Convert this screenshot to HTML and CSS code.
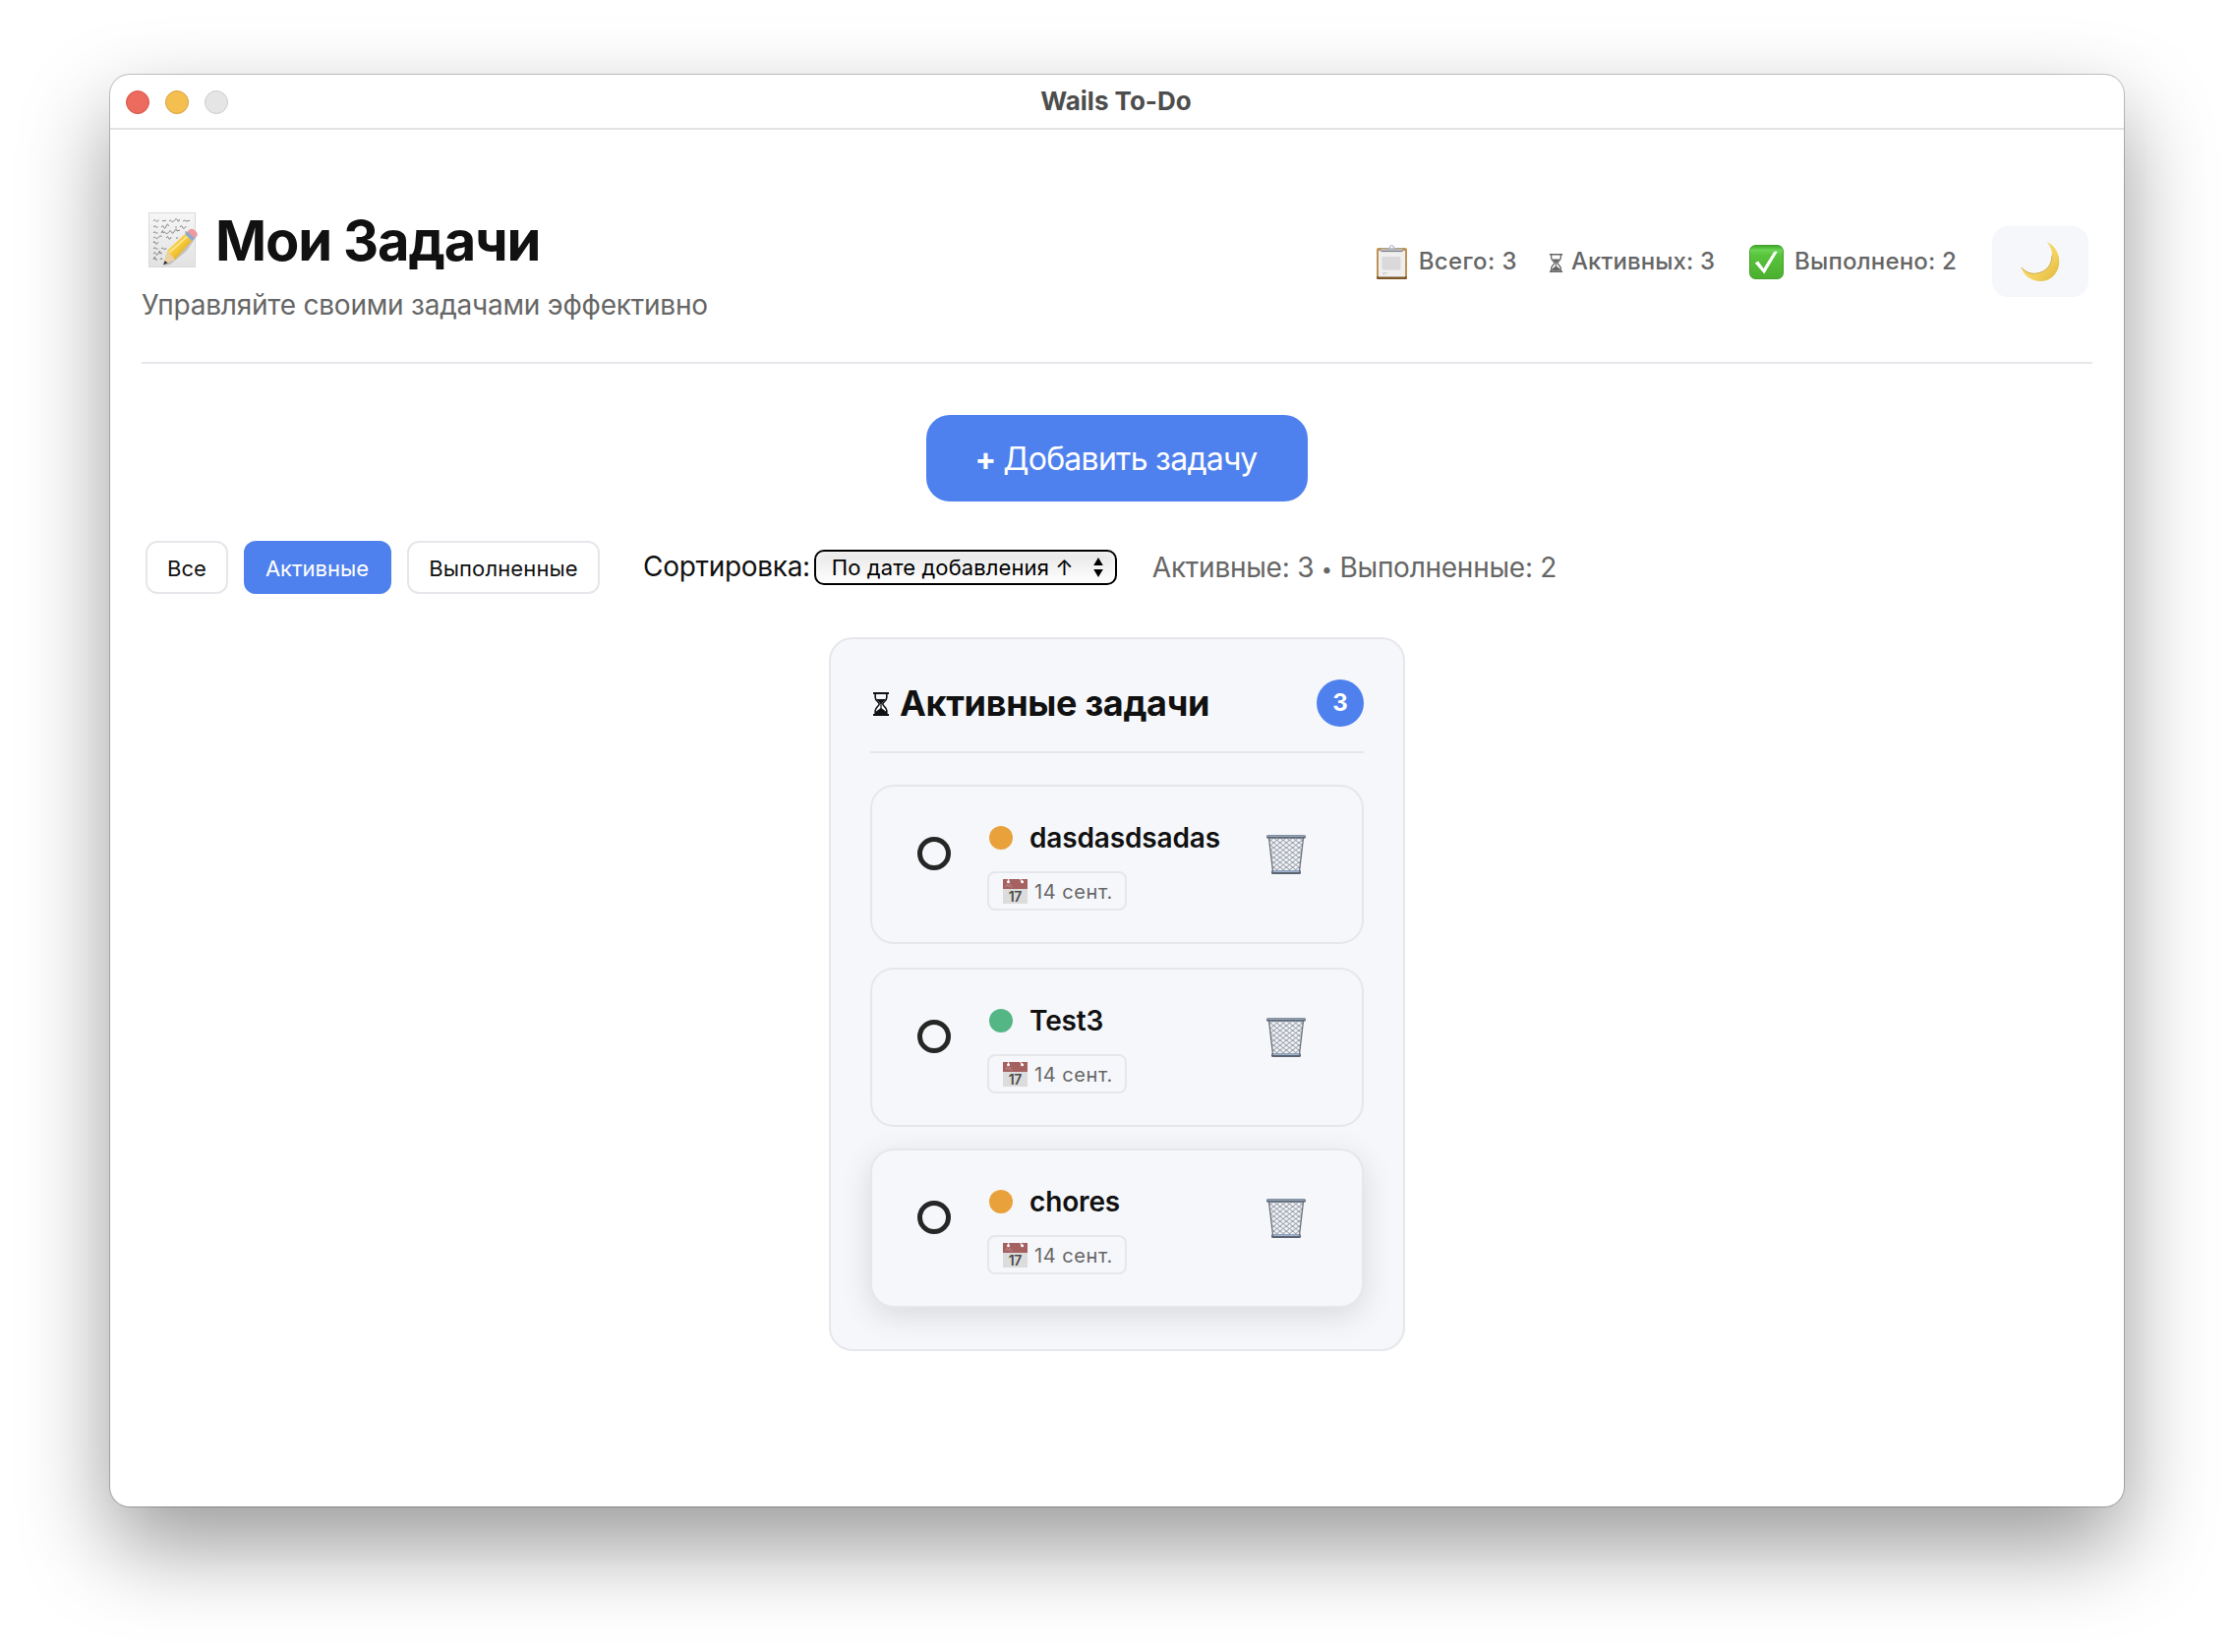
FILE: index.html
```html
<!DOCTYPE html>
<html lang="ru">
<head>
<meta charset="utf-8">
<title>Wails To-Do</title>
<link rel="stylesheet" href="styles.css">
</head>
<body>
<svg class="defs" width="0" height="0" aria-hidden="true">
  <defs>
    <linearGradient id="paper" x1="0" y1="0" x2="0" y2="1"><stop offset="0" stop-color="#f6f6f6"/><stop offset="1" stop-color="#e2e2e2"/></linearGradient>
    <linearGradient id="green" x1="0" y1="0" x2="0" y2="1"><stop offset="0" stop-color="#3fa82a"/><stop offset=".14" stop-color="#6bd454"/><stop offset=".28" stop-color="#59c43c"/><stop offset="1" stop-color="#4caf2f"/></linearGradient>
    <linearGradient id="moon" x1="0" y1="0" x2="1" y2="1"><stop offset="0" stop-color="#f7df78"/><stop offset=".6" stop-color="#f4d35c"/><stop offset="1" stop-color="#dfb43c"/></linearGradient>
    <linearGradient id="pencil" x1="0" y1="0" x2="1" y2="1"><stop offset="0" stop-color="#fbe07a"/><stop offset=".5" stop-color="#f5c83a"/><stop offset="1" stop-color="#c98e1c"/></linearGradient>
    <pattern id="mesh" width="6.400" height="5" patternUnits="userSpaceOnUse" x="1" y="3"><path d="M0 0L6.400 5M6.400 0L0 5" stroke="#858b94" stroke-width=".9"/></pattern>
    <symbol id="i-hourglass" viewBox="0 0 18 24">
      <path d="M1 1h16M1 23h16" stroke="currentColor" stroke-width="1.800" fill="none"/>
      <path d="M3.200 1v4.500c0 3 4 4.600 4 6.500s-4 3.500-4 6.500V23M14.800 1v4.500c0 3-4 4.600-4 6.500s4 3.500 4 6.500V23" stroke="currentColor" stroke-width="1.600" fill="none"/>
      <path d="M4.500 7h9c-1 2-3.300 3.200-3.900 5v4.200l4.400 3.300V22H4v-2.500l4.400-3.300V12C7.800 10.200 5.500 9 4.500 7z" fill="currentColor"/>
    </symbol>
    <symbol id="i-trash" viewBox="0 0 40 40">
      <path d="M2.500 3h35l-4 34h-27z" fill="#f1f3f8"/>
      <path d="M2.500 3h35l-4 34h-27z" fill="url(#mesh)"/>
      <path d="M2.500 3l4 34M37.500 3l-4 34" stroke="#6a727d" stroke-width="1.300"/>
      <rect x="0" y="0" width="40" height="3.800" rx="1.900" fill="#5d6977"/>
      <rect x="1" y=".5" width="38" height="1.300" rx=".6" fill="#a9b9cb"/>
      <rect x="5" y="36" width="30" height="4" rx="1.500" fill="#5b6470"/>
      <rect x="6.500" y="36.200" width="27" height="1.800" rx=".9" fill="#9fb4d0"/>
    </symbol>
    <symbol id="i-calendar" viewBox="0 0 25 25">
      <rect width="25" height="25" fill="#dcdcdc"/>
      <rect width="25" height="10" fill="#a56060"/>
      <path d="M2.500 8l1.500-3 1.500 3 1.500-3 1 3h2" stroke="#bf8b8b" stroke-width=".8" fill="none"/>
      <path d="M5.500 0v2.500M17.500 0l2 2.500" stroke="#f3dede" stroke-width="1.200"/>
      <circle cx="5.500" cy="2.800" r="1.500" fill="#fff"/><circle cx="19.600" cy="2.800" r="1.500" fill="#fff"/>
      <text x="12.300" y="22.500" text-anchor="middle" class="cal-num">17</text>
    </symbol>
  </defs>
</svg>

<main class="window">
  <div class="titlebar">
    <div class="lights"><i class="light red"></i><i class="light yellow"></i><i class="light grey"></i></div>
    <span class="window-title">Wails To-Do</span>
  </div>

  <div class="app">
    <header class="header">
      <div class="heading">
        <h1 class="title">
          <svg class="memo" viewBox="0 0 50 56">
            <rect x=".5" y=".5" width="47" height="55" fill="url(#paper)" stroke="#d9d9d9"/>
            <path d="M5 9q1.500-3 2.500-.5t3-1M14 9q1-2 2 0l2-1M21 9q1.500-2 2.500 0t3-1 3 0 2-1M35 9q2-2 3 0l4-.7M5 15q1.500-3 2.500 0h2M13 15q1.500-3 2.500 0t2.500-1 2.500 0M27 15h2M32 15q1.500-3 2.500 0t4-1M5 21q1.500-3 2.500 0h2M13 21l1.500-2.500.5 2.500q1.500-2 2.500 0t3-1 3 0 3-1 2.500 0l3-1M37 20h2M5 26q1.500-2 2.500 0t3-1 3 0M18 26q1.500-3 2.500 0t2.500-1M28 26h2M5 31q1-3 2 0t3-1M5 37q1.500-3 2.500 0h2M13 37q1-2 2.500 0t2.500-1M5 42q1.500-3 2.500 0t3-1l1-2 .5 3 2-1M5 48l1.500-3 .5 3h2M12 48q1-3 2 0" stroke="#6b6b6b" stroke-width=".8" fill="none"/>
            <path d="M16 54l22-20 10-14 2 3-11 16-17 14z" fill="#8a8a8a" opacity=".4"/>
            <path d="M19 39L37 22l7 7-17 19z" fill="url(#pencil)"/>
            <path d="M21.500 40.500L39.500 24.500" stroke="#fdeb9c" stroke-width="1.500"/>
            <path d="M19 39l8 9-11.500 5z" fill="#ecd0a0"/>
            <path d="M16.600 49l3 2.600-4.600 1.900z" fill="#333"/>
            <path d="M37 22l3-2.800 7.500 6.500-3.500 3.300z" fill="#8fa9c8"/>
            <path d="M39.500 19.500q3-4.500 7.500-1.500 4.500 3.500 1.500 6.500l-1.500 1.500z" fill="#ee9aa0"/>
          </svg>
          <span>Мои Задачи</span>
        </h1>
        <p class="subtitle">Управляйте своими задачами эффективно</p>
      </div>
      <div class="stats">
        <div class="stat total">
          <svg width="31" height="35" viewBox="0 0 31 35">
            <rect y="3" width="31" height="32" rx="2" fill="#bf9256"/>
            <rect y="32" width="31" height="3" rx="1.500" fill="#7d5526"/>
            <rect x="2" y="6" width="27" height="26.500" fill="#efefef"/>
            <rect x="5.500" y="12" width="19" height="13.500" rx="1" fill="#d9d9d9"/>
            <path d="M6 28.500h5M6 30h3" stroke="#d0d0d0"/>
            <path d="M4.500 6.500V3.800h7L13.500 2h4l2 1.800h7v2.700z" fill="#b4babf"/>
            <path d="M4.500 6.600h22" stroke="#7b7b7b"/>
            <circle cx="15.500" cy="2.300" r="1.800" fill="#fff" stroke="#9fb0c0"/>
          </svg>
          <span>Всего: 3</span>
        </div>
        <div class="stat active-count">
          <svg width="15" height="19" viewBox="0 0 18 24" preserveAspectRatio="none"><use href="#i-hourglass"/></svg>
          <span>Активных: 3</span>
        </div>
        <div class="stat done">
          <svg width="35" height="35" viewBox="0 0 35 35">
            <rect width="35" height="35" rx="6.500" fill="#419c2b"/>
            <rect x=".8" y=".8" width="33.400" height="33.400" rx="6" fill="url(#green)"/>
            <path d="M5.800 18.500l3.400-2 5.300 7.600L25.300 6.800h3.500L15.300 29.500z" fill="#fff"/>
          </svg>
          <span>Выполнено: 2</span>
        </div>
        <button class="theme" aria-label="Тема">
          <svg width="40" height="42" viewBox="0 0 40 42"><path d="M26.500.8C36 5 40.500 15 39 25 37 35 29 41.300 19.500 41 10.500 40.700 3 35.500.6 26.800 5 32 10.500 34 16.500 33 26.500 31.500 32 24 32 14.500 32 9.500 30 5 26.500.8z" fill="url(#moon)"/><path d="M.6 26.800C5 32 10.500 34 16.500 33 26.500 31.500 32 24 32 14.500" fill="none" stroke="#c69a2e" stroke-width=".8"/></svg>
        </button>
      </div>
    </header>

    <div class="add-row"><button class="add"><b class="plus">+</b><span>Добавить задачу</span></button></div>

    <div class="toolbar">
      <div class="filters">
        <button class="filter all">Все</button>
        <button class="filter active selected">Активные</button>
        <button class="filter completed">Выполненные</button>
      </div>
      <label class="sort"><span class="sort-label">Сортировка:</span>
        <span class="select"><span>По дате добавления ↑</span>
          <svg width="10" height="20" viewBox="0 0 10 20"><path d="M5 0l4.800 8H.2zM5 20l4.800-8H.2z"/></svg>
        </span>
      </label>
      <span class="summary">Активные: 3 <span class="bullet">•</span> Выполненные: 2</span>
    </div>

    <section class="panel">
      <div class="panel-head">
        <h2 class="panel-title"><svg width="18" height="24"><use href="#i-hourglass"/></svg><span>Активные задачи</span></h2>
        <span class="badge">3</span>
      </div>
      <div class="tasks">
        <article class="task">
          <i class="check"></i>
          <div class="body">
            <div class="name"><i class="dot medium"></i><span>dasdasdsadas</span></div>
            <div class="date"><svg width="25" height="25"><use href="#i-calendar"/></svg><span>14 сент.</span></div>
          </div>
          <svg class="trash" width="40" height="40"><use href="#i-trash"/></svg>
        </article>
        <article class="task">
          <i class="check"></i>
          <div class="body">
            <div class="name"><i class="dot low"></i><span>Test3</span></div>
            <div class="date"><svg width="25" height="25"><use href="#i-calendar"/></svg><span>14 сент.</span></div>
          </div>
          <svg class="trash" width="40" height="40"><use href="#i-trash"/></svg>
        </article>
        <article class="task raised">
          <i class="check"></i>
          <div class="body">
            <div class="name"><i class="dot medium"></i><span>chores</span></div>
            <div class="date"><svg width="25" height="25"><use href="#i-calendar"/></svg><span>14 сент.</span></div>
          </div>
          <svg class="trash" width="40" height="40"><use href="#i-trash"/></svg>
        </article>
      </div>
    </section>
  </div>
</main>
</body>
</html>
```
FILE: styles.css
```css
* { box-sizing: border-box; }
html, body { height: 100%; }
body {
  margin: 0;
  padding: 76px 112px;
  overflow: hidden;
  background: #fff;
  color: #111;
  font-family: Inter, "Noto Sans", sans-serif;
}
h1, h2, p { margin: 0; }
i { display: block; flex: none; }
svg { display: block; flex: none; }
span { white-space: nowrap; }
button { margin: 0; padding: 0; border: 0; font-family: inherit; color: inherit; }
.defs { position: absolute; }

.window {
  height: 1456px;
  border-radius: 20px;
  background: #fff;
  box-shadow: 0 0 0 1px rgba(0, 0, 0, .22), 0 40px 90px rgba(0, 0, 0, .4);
}
.titlebar {
  display: grid;
  grid-template-columns: 1fr auto 1fr;
  align-items: center;
  height: 56px;
  padding: 0 16px;
  border-bottom: 2px solid #e2e2e2;
}
.lights { display: flex; gap: 16px; padding-top: 2px; }
.light { width: 24px; height: 24px; border-radius: 50%; border: 1px solid; }
.red { background: #ec6a5e; border-color: #d55549; }
.yellow { background: #f4bf4f; border-color: #d8a23a; }
.grey { background: #e5e5e5; border-color: #cdcdcd; }
.window-title { padding: 0 2px 1px 0; font-size: 26px; line-height: 32px; font-weight: 700; color: #4d4d4d; }

.app { padding: 0 32px; }
.header {
  display: flex;
  justify-content: space-between;
  align-items: center;
  height: 238px;
  padding: 78px 0 41px;
  border-bottom: 2px solid #e5e7eb;
}
.title { display: flex; align-items: center; gap: 18px; height: 68px; padding-left: 7px; font-size: 56px; line-height: 68px; font-weight: 700; letter-spacing: -1.15px; }
.title span { padding-top: 1px; }
.memo { width: 50px; height: 56px; margin-bottom: 1px; }
.subtitle { margin-top: 15px; font-size: 28px; line-height: 34px; letter-spacing: -.22px; color: #666; }

.stats { display: flex; align-items: center; margin: 0 4px 5px 0; font-size: 24px; line-height: 30px; font-weight: 500; color: #666; }
.stat { display: flex; align-items: center; }
.total { gap: 12px; letter-spacing: .4px; }
.active-count { gap: 8px; margin-left: 32px; letter-spacing: .1px; }
.active-count svg { margin-top: 3px; }
.done { gap: 11px; margin-left: 35px; letter-spacing: .18px; }
.stat span { margin-bottom: 1px; }
.theme { display: grid; place-items: center; width: 98px; height: 72px; margin-left: 36px; border-radius: 16px; background: #f5f7fb; }

.add-row { display: flex; justify-content: center; margin-top: 52px; }
.add { display: flex; align-items: center; justify-content: center; gap: 7px; width: 388px; height: 88px; border-radius: 24px; background: #4f81ee; color: #fff; font-size: 32px; line-height: 40px; letter-spacing: -.75px; padding: 2px 2px 0 0; }
.plus { font-weight: 700; letter-spacing: 0; }

.toolbar { display: flex; align-items: center; height: 54px; margin-top: 40px; padding-left: 4px; }
.filters { display: flex; gap: 16px; }
.filter { height: 54px; padding-top: 2px; border: 2px solid #e5e7eb; border-radius: 12px; background: #fff; color: #111; font-size: 22px; line-height: 28px; }
.all { width: 84px; }
.active { width: 150px; padding-right: 1px; }
.completed { width: 196px; letter-spacing: .12px; }
.selected { border-color: #4f81ee; background: #4f81ee; color: #fff; }
.sort { display: flex; align-items: center; gap: 4px; margin-left: 44px; }
.sort-label { padding-bottom: 2px; font-size: 28px; line-height: 34px; letter-spacing: -.3px; }
.select {
  display: flex; align-items: center; justify-content: space-between;
  width: 308px; height: 36px; padding: 0 12px 0 16px;
  border: 2px solid #000; border-radius: 10px;
  background: linear-gradient(#e6e6e6, #fff);
  box-shadow: inset 0 0 6px rgba(255, 255, 255, .9);
  color: #000; font-size: 22px; line-height: 28px; letter-spacing: .1px;
}
.summary { margin-left: 36px; padding-top: 2px; font-size: 28px; line-height: 34px; letter-spacing: -.25px; color: #666; }
.bullet { font-size: 20px; vertical-align: 1px; }

.panel { width: 586px; margin: 44px auto 0; padding: 40px; border: 2px solid #e5e7eb; border-radius: 24px; background: #f6f7fb; }
.panel-head { display: flex; align-items: center; justify-content: space-between; height: 76px; padding-bottom: 24px; border-bottom: 2px solid #e5e7eb; }
.panel-title { display: flex; align-items: center; gap: 10px; padding-left: 2px; font-size: 36px; line-height: 44px; font-weight: 700; letter-spacing: -.3px; }
.panel-title svg { margin-top: 2px; }
.badge { width: 48px; height: 48px; border-radius: 50%; background: #4f81ee; color: #fff; font-size: 24px; line-height: 47px; font-weight: 700; text-align: center; }

.tasks { display: flex; flex-direction: column; gap: 24px; margin-top: 32px; }
.task { display: flex; align-items: flex-start; height: 162px; padding: 35px 57px 0 46px; border: 2px solid #e5e7eb; border-radius: 24px; background: #f6f7fb; }
.raised { transform: translateY(-2px); box-shadow: 0 8px 32px rgba(0, 0, 0, .12); }
.check { width: 34px; height: 34px; margin-top: 16px; border: 5px solid #262626; border-radius: 50%; }
.body { flex: 1; margin-left: 37px; }
.name { display: flex; align-items: center; gap: 17px; padding-left: 2px; font-size: 28px; line-height: 34px; font-weight: 600; letter-spacing: -.15px; }
.dot { width: 24px; height: 24px; border-radius: 50%; }
.medium { background: #e9a23b; }
.low { background: #55b685; }
.date { display: flex; align-items: center; gap: 7px; width: 142px; height: 40px; margin-top: 17px; padding-left: 14px; border: 2px solid #e5e7eb; border-radius: 8px; font-size: 20px; line-height: 26px; letter-spacing: .55px; color: #666; }
.date span { padding-top: 2px; }
.cal-num { font: 600 14px Inter, sans-serif; letter-spacing: -.5px; fill: #4a4a4a; }
.trash { margin-top: 14px; }
```
